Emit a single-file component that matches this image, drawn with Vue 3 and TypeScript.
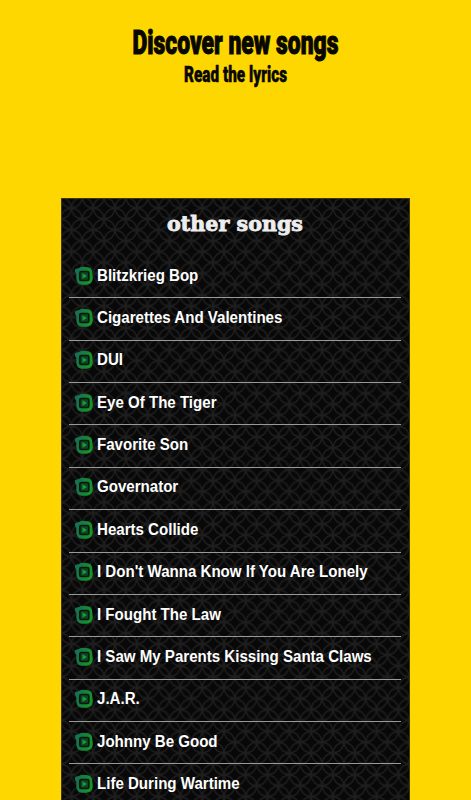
<script setup lang="ts">
const songs: string[] = [
  'Blitzkrieg Bop',
  'Cigarettes And Valentines',
  'DUI',
  'Eye Of The Tiger',
  'Favorite Son',
  'Governator',
  'Hearts Collide',
  "I Don't Wanna Know If You Are Lonely",
  'I Fought The Law',
  'I Saw My Parents Kissing Santa Claws',
  'J.A.R.',
  'Johnny Be Good',
  'Life During Wartime',
]
</script>

<template>
  <main class="page">
    <header class="hero">
      <svg class="headline" width="471" height="90" viewBox="0 0 471 90">
        <text class="title" x="132.500" y="54" textLength="206" lengthAdjust="spacingAndGlyphs">Discover new songs</text>
        <text class="subtitle" x="184" y="82" textLength="103" lengthAdjust="spacingAndGlyphs">Read the lyrics</text>
      </svg>
    </header>
    <section class="panel">
      <svg class="pattern" width="100%" height="100%">
        <defs>
          <pattern id="rings" x="-1.500" y="9.100" width="21.8" height="21.8" patternUnits="userSpaceOnUse">
            <g fill="none" stroke="#1e1e1e" stroke-width="1.4">
              <circle cx="10.9" cy="10.9" r="10.7" />
              <circle cx="0" cy="0" r="10.7" />
              <circle cx="21.8" cy="0" r="10.7" />
              <circle cx="0" cy="21.8" r="10.7" />
              <circle cx="21.8" cy="21.8" r="10.7" />
            </g>
          </pattern>
        </defs>
        <rect width="100%" height="100%" fill="url(#rings)" />
      </svg>
      <svg class="heading" width="346" height="49" viewBox="0 0 346 49">
        <text x="105" y="32" textLength="136" lengthAdjust="spacingAndGlyphs">other songs</text>
      </svg>
      <ul class="songs">
        <li v-for="song in songs" :key="song" class="song">
          <svg class="icon" width="20" height="20" viewBox="0 0 20 20">
            <defs>
              <linearGradient id="green" x1="0" y1="0" x2="1" y2="0.3">
                <stop offset="0" stop-color="#17695a" />
                <stop offset="1" stop-color="#159526" />
              </linearGradient>
            </defs>
            <path d="M.8 3.500Q2.500 2.300 5 2Q6.500 .8 9 .8L14 1.200Q17.500 2 18 5L18.800 12Q18.600 16.500 15.500 18Q10 19.700 5 18Q2.500 16.500 2.300 12V8Q.5 6 .8 3.500Z" fill="url(#green)" />
            <rect x="5.800" y="5.500" width="9" height="9" rx="1.500" fill="#0f4525" stroke="#06170f" stroke-width="1.700" />
            <path d="M8.500 7.300L13 10L8.500 12.700Z" fill="#1a9a38" />
          </svg>
          <span class="name">{{ song }}</span>
        </li>
      </ul>
    </section>
  </main>
</template>

<style>
body {
  background: #ffd700;
  overflow: hidden;
}
</style>

<style scoped>
.page {
  height: 800px;
  overflow: hidden;
  background: #ffd700;
}
.hero {
  height: 198px;
}
.headline,
.heading {
  display: block;
}
.headline text {
  font-family: Roboto, 'Liberation Sans', sans-serif;
  font-weight: 900;
  fill: #080800;
  stroke: #080800;
}
.headline .title {
  font-size: 34px;
  stroke-width: 1.1px;
}
.headline .subtitle {
  font-size: 22px;
  stroke-width: 0.5px;
}
.panel {
  position: relative;
  box-sizing: border-box;
  width: 349px;
  height: 620px;
  margin-left: 61px;
  border: 1px solid #3b3615;
  background: #080808;
}
.pattern {
  position: absolute;
  inset: 0;
}
.heading {
  position: relative;
}
.heading text {
  font: bold 20px 'DejaVu Serif', serif;
  fill: #eee;
  stroke: #eee;
  stroke-width: 0.8px;
}
.songs {
  position: relative;
  list-style: none;
  margin: 0;
  padding: 8.100px 8px 0 7px;
}
.song {
  box-sizing: border-box;
  display: flex;
  align-items: center;
  gap: 3px;
  height: 42.350px;
  padding: 0 0 2px 5px;
  border-bottom: 1px solid #999;
  color: #fff;
  font: bold 16px/20px 'Liberation Sans', Arial, sans-serif;
  white-space: nowrap;
}
.name {
  transform: scaleX(0.942);
  transform-origin: left center;
}
.icon {
  flex: none;
}
</style>
